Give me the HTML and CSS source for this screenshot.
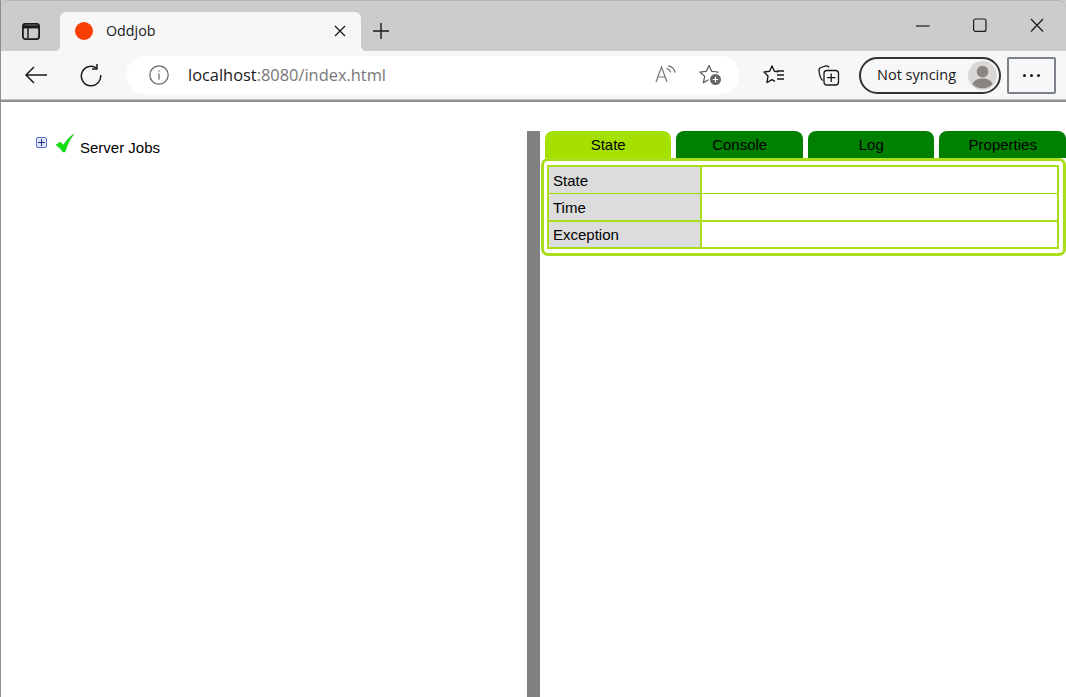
FILE: index.html
```html
<!DOCTYPE html>
<html>
<head>
    <title>Oddjob</title>
    <link rel="stylesheet" href="styles.css">
</head>
<body>
    <div class="window">
        <div class="tabstrip">
            <svg class="tabs-icon" width="20" height="20" viewBox="0 0 20 20" fill="none" stroke="#1a1a1a" stroke-width="1.800">
                <rect x="1.900" y="2.900" width="16.200" height="15.200" rx="2.500"/>
                <path d="M2 5.800h16" stroke-width="3.200"/>
                <path d="M7 7v10" stroke-width="1.500"/>
            </svg>
            <div class="tab">
                <span class="favicon"></span>
                <span class="tab-title">Oddjob</span>
                <svg class="tab-close" width="12" height="12" viewBox="0 0 12 12" stroke="#1a1a1a" stroke-width="1.300"><path d="M1 1l10 10M11 1L1 11"/></svg>
            </div>
            <svg class="new-tab" width="18" height="18" viewBox="0 0 18 18" stroke="#1a1a1a" stroke-width="1.400"><path d="M9 1v16M1 9h16"/></svg>
            <div class="window-controls">
                <svg width="14" height="14" viewBox="0 0 14 14" stroke="#1a1a1a" stroke-width="1.200"><path d="M0 8h13.500"/></svg>
                <svg width="14" height="14" viewBox="0 0 14 14" fill="none" stroke="#1a1a1a" stroke-width="1.200"><rect x="0.600" y="1" width="12.400" height="12.400" rx="2"/></svg>
                <svg width="14" height="14" viewBox="0 0 14 14" stroke="#1a1a1a" stroke-width="1.200"><path d="M1 1l12 12.500M13 1L1 13.500"/></svg>
            </div>
        </div>

        <div class="toolbar">
            <svg class="back" width="24" height="20" viewBox="0 0 24 20" fill="none" stroke="#1a1a1a" stroke-width="1.500"><path d="M23 10H2M10 2l-8 8 8 8"/></svg>
            <svg class="reload" width="24" height="24" viewBox="0 0 24 24" fill="none" stroke="#1a1a1a" stroke-width="1.500"><path d="M17.500 5A9.700 9.700 0 1 0 21.700 12"/><path d="M18 1v5h-5"/></svg>
            <div class="address">
                <svg width="20" height="20" viewBox="0 0 20 20" fill="none" stroke="#666"><circle cx="10" cy="10" r="9.200" stroke-width="1.200"/><path d="M10 8.500v6" stroke-width="1.200"/><path d="M10 5.400v1.200" stroke-width="1.400"/></svg>
                <span class="url"><span class="host">localhost</span>:8080/index.html</span>
                <svg class="read-aloud" width="22" height="20" viewBox="0 0 22 20" fill="none" stroke="#777" stroke-width="1.200"><path d="M1 17L6.500 2 12 17M3 12h7"/><path d="M11.500 3.500a5 5 0 0 1 4 4M13 0.800a8 8 0 0 1 7 6.800"/></svg>
                <svg class="add-fav" width="24" height="22" viewBox="0 0 24 22" fill="none"><path d="M10 1.500l2.700 5.800 6.300.7-4.700 4.400 1.300 6.300-5.600-3.200-5.600 3.200 1.300-6.300L1 8l6.300-.7z" stroke="#555" stroke-width="1.200" stroke-linejoin="round"/><circle cx="16.500" cy="15.500" r="7" fill="#fff"/><circle cx="16.500" cy="15.500" r="5.500" fill="#666"/><path d="M16.500 12.800v5.400M13.800 15.500h5.400" stroke="#fff" stroke-width="1.200"/></svg>
            </div>
            <svg class="favs" width="22" height="20" viewBox="0 0 22 20" fill="none" stroke="#1a1a1a" stroke-width="1.400"><path d="M15.500 6.800L11.400 6.300 9 1 6.600 6.300 1 7 5 11 4 17.500 9 14.600 12 16.400" stroke-linejoin="round"/><path d="M14 6h7M14 10h7M14 14h7"/></svg>
            <svg class="collections" width="22" height="22" viewBox="0 0 22 22" fill="none" stroke="#1a1a1a" stroke-width="1.300"><path d="M5 16.500C3 15.500 1.500 11 1 7c-.2-2 .5-3 2-3.500L8 2c1.500-.4 2.500 0 3 1.500"/><rect x="6" y="6.500" width="14.500" height="14.500" rx="3"/><path d="M13.200 9.500v8.500M9 13.700h8.500"/></svg>
            <div class="profile">
                <span>Not syncing</span>
                <svg class="avatar" width="30" height="30" viewBox="0 0 30 30"><circle cx="15" cy="15" r="15" fill="#d9d7d5"/><circle cx="15" cy="11" r="6" fill="#8a8583"/><path d="M4.500 24c1.500-4 5.500-6 10.500-6s9 2 10.500 6a15 15 0 0 1-21 0z" fill="#8a8583"/></svg>
            </div>
            <div class="menu-btn"><i></i><i></i><i></i></div>
        </div>

        <div class="page">
            <div class="tree">
                <span class="expand"></span>
                <svg class="tick" width="20" height="20" viewBox="0 0 20 20"><path d="M1 12L5 9l3.500 3C11 8 14 4 19 1c-4 5-7 11-9 18H8c-2-3-4-5-7-7z" fill="#14e014" stroke="#0cb80c" stroke-width=".5"/></svg>
                <span class="tree-label">Server Jobs</span>
            </div>
            <div class="splitter"></div>
            <div class="detail">
                <div class="detail-tabs">
                    <div class="detail-tab active">State</div>
                    <div class="detail-tab">Console</div>
                    <div class="detail-tab">Log</div>
                    <div class="detail-tab">Properties</div>
                </div>
                <div class="panel">
                    <table class="state-table">
                        <tr><td class="name">State</td><td></td></tr>
                        <tr class="thick"><td class="name">Time</td><td></td></tr>
                        <tr class="last"><td class="name">Exception</td><td></td></tr>
                    </table>
                </div>
            </div>
        </div>
    </div>
</body>
</html>
```
FILE: styles.css
```css
html, body {
    margin: 0;
    height: 100%;
    overflow: hidden;
    background: #fff;
}
svg {
    display: block;
    flex: none;
}
.window {
    height: 697px;
    display: flex;
    flex-direction: column;
    font-family: "Liberation Sans", Arial, sans-serif;
    border-left: 1px solid #8f8f8f;
    background: #ccc;
}

/* browser chrome */
.tabstrip {
    height: 51px;
    display: flex;
    align-items: flex-end;
    background: #ccc;
    border-radius: 8px 8px 0 0;
    border-top: 1px solid #b5b5b5;
    box-sizing: border-box;
    flex: none;
}
.tabs-icon {
    margin: 0 19px 10px 20px;
}
.tab {
    position: relative;
    width: 301px;
    height: 39px;
    background: #f7f7f7;
    border-radius: 6px 6px 0 0;
    display: flex;
    align-items: center;
    box-sizing: border-box;
    padding: 0 15px 2px 15px;
}
.tab::before,
.tab::after {
    content: "";
    position: absolute;
    bottom: 0;
    width: 5px;
    height: 5px;
}
.tab::before {
    left: -5px;
    background: radial-gradient(circle at 0 0, transparent 5px, #f7f7f7 5px);
}
.tab::after {
    right: -5px;
    background: radial-gradient(circle at 100% 0, transparent 5px, #f7f7f7 5px);
}
.favicon {
    width: 18px;
    height: 18px;
    border-radius: 50%;
    background: #fa3f05;
    margin-right: 13px;
}
.tab-title {
    font-family: "Open Sans", sans-serif;
    font-size: 14.300px;
    color: #1a1a1a;
    flex: 1;
}
.new-tab {
    margin: 0 0 11px 11px;
}
.window-controls {
    margin-left: auto;
    display: flex;
    gap: 43px;
    padding: 0 22px 19px 0;
}
.toolbar {
    height: 48px;
    display: flex;
    align-items: center;
    background: #f7f7f7;
    border-bottom: 1px solid #c4c4c4;
    flex: none;
}
.back {
    margin-left: 23px;
}
.reload {
    margin-left: 31px;
}
.address {
    width: 613px;
    height: 38px;
    margin-left: 23px;
    background: #fff;
    border-radius: 19px;
    display: flex;
    align-items: center;
    box-sizing: border-box;
    padding-left: 23px;
}
.url {
    font-family: "Open Sans", sans-serif;
    font-size: 16.400px;
    color: #777;
    margin-left: 19px;
    flex: 1;
    position: relative;
    top: -1px;
}
.host {
    color: #1a1a1a;
}
.read-aloud {
    margin-right: 22px;
}
.add-fav {
    margin-right: 16px;
}
.favs {
    margin-left: 24px;
}
.collections {
    margin-left: 33px;
}
.profile {
    width: 142px;
    height: 37px;
    margin-left: 19px;
    box-sizing: border-box;
    border: 2px solid #333;
    border-radius: 19px;
    display: flex;
    align-items: center;
    justify-content: space-between;
    padding: 0 2px 0 16px;
    font-family: "Open Sans", sans-serif;
    font-size: 14.500px;
    color: #1a1a1a;
}
.profile span {
    position: relative;
    top: -1px;
}
.avatar {
    width: 29px;
    height: 29px;
}
.menu-btn {
    width: 49px;
    height: 37px;
    box-sizing: border-box;
    margin-left: 6px;
    border: 2px solid #7b8188;
    border-radius: 2px;
    display: flex;
    align-items: center;
    justify-content: center;
    gap: 4px;
}
.menu-btn i {
    width: 3px;
    height: 3px;
    border-radius: 50%;
    background: #1a1a1a;
}

/* page content */
.page {
    flex: 1;
    display: flex;
    background: #fff;
    border-top: 2px solid #8f8f8f;
    padding-top: 29px;
    min-height: 0;
}
.tree {
    width: 526px;
    box-sizing: border-box;
    padding: 4px 0 0 35px;
    display: flex;
    align-items: flex-start;
    font-size: 15px;
    color: #000;
}
.expand {
    width: 9px;
    height: 9px;
    margin-top: 2px;
    border: 1px solid #5b70d0;
    border-radius: 2px;
    background:
        linear-gradient(#1e2a80, #1e2a80) center / 7px 1px no-repeat,
        linear-gradient(#1e2a80, #1e2a80) center / 1px 7px no-repeat,
        #e1e5f9;
}
.tick {
    margin-left: 8px;
    margin-top: -2px;
}
.tree-label {
    margin: 4px 0 0 5px;
}
.splitter {
    width: 13px;
    background: #808080;
}
.detail {
    flex: 1;
    padding-left: 1px;
    min-width: 0;
}
.detail-tabs {
    display: flex;
    gap: 5px;
    padding-left: 3.900px;
}
.detail-tab {
    flex: 1;
    height: 27px;
    line-height: 27px;
    text-align: center;
    font-size: 15px;
    color: #000;
    background: #008000;
    border-radius: 8px 8px 0 0;
}
.detail-tab.active {
    background: #a6e000;
}
.panel {
    border: 3px solid #aade1a;
    border-radius: 7px;
    padding: 4px 4px 4px 3px;
}
.state-table {
    width: 100%;
    border-collapse: separate;
    border-spacing: 0;
    border: 2px solid #aade1a;
    font-size: 15px;
}
.state-table td {
    height: 26px;
    padding: 0 0 0 4px;
    border-bottom: 1px solid #a0dc00;
}
.state-table td.name {
    width: 147px;
    background: #dcdcdc;
    border-right: 2px solid #aade1a;
}
.state-table .thick td {
    border-bottom: 2px solid #aade1a;
}
.state-table .last td {
    height: 25px;
    border-bottom: none;
}
```
